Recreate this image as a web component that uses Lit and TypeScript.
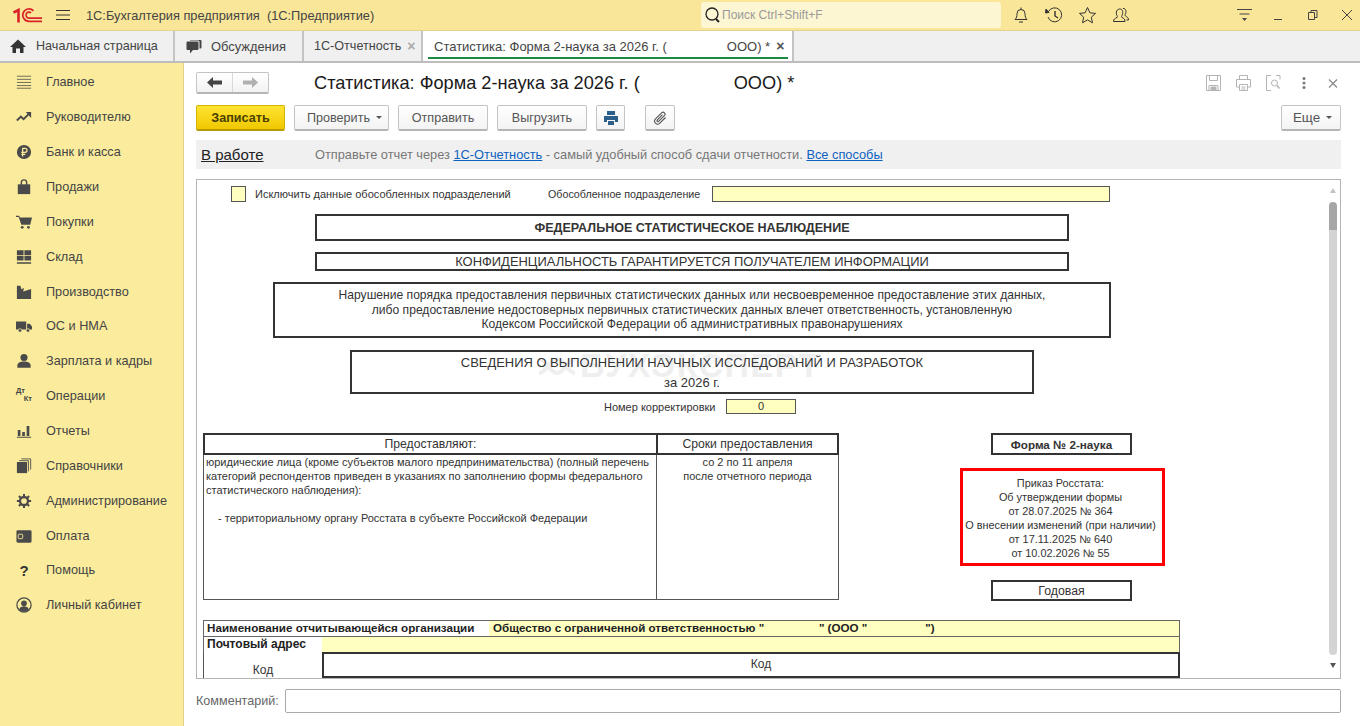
import { LitElement, html, css, svg } from 'lit';
import { customElement } from 'lit/decorators.js';

const ink = '#4a4a4a';

const navIcons: Record<string, unknown> = {
  main: svg`<path d="M1 2.500h16M1 6h16M1 9.500h16M1 13h16M1 16h16" stroke="#6a6a5a" stroke-width="1.100" fill="none"/>`,
  boss: svg`<path d="M1 13l4.500-4.500 3 3 5.500-5.500" stroke="${ink}" stroke-width="2.200" fill="none"/><path d="M11 3.500h6V10z" fill="${ink}"/>`,
  bank: svg`<circle cx="9" cy="9" r="8" fill="${ink}"/><path d="M7.500 14V4.800h2.600a2.200 2.200 0 0 1 0 4.600H6M6 11.600h4.500" stroke="#fbec9d" stroke-width="1.400" fill="none"/>`,
  sale: svg`<path d="M2 6h14v11H2z" fill="${ink}"/><path d="M6 8V4a3 3 0 0 1 6 0v4" stroke="${ink}" stroke-width="1.600" fill="none"/>`,
  cart: svg`<path d="M0 2h3.500l1 2H18l-2 8H6L3 3.500H0z" fill="${ink}"/><circle cx="7" cy="15" r="1.600" fill="${ink}"/><circle cx="14" cy="15" r="1.600" fill="${ink}"/>`,
  store: svg`<path d="M1 1.500h7.500v5.500H1zM9.500 1.500H17v5.500H9.500zM1 8h7.500v5H1zM9.500 8H17v5H9.500zM1 15h16v1.500H1z" fill="${ink}"/>`,
  plant: svg`<path d="M1 2h4l1 4 3-1.500-1 4 9-3V17H1z" fill="${ink}"/>`,
  truck: svg`<path d="M0 4h11.500v9H0zM12.500 6.500h3l2.500 3v3.500h-5.500z" fill="${ink}"/><circle cx="4.500" cy="14" r="2" fill="${ink}" stroke="#fbec9d" stroke-width=".8"/><circle cx="13.500" cy="14" r="2" fill="${ink}" stroke="#fbec9d" stroke-width=".8"/>`,
  person: svg`<circle cx="9" cy="5" r="4" fill="${ink}"/><path d="M1.500 14c0-3 3.500-4.500 7.500-4.500s7.500 1.500 7.500 4.500v2.500h-15z" fill="${ink}"/>`,
  report: svg`<path d="M2 8h3v6.500H2zM7 10h3v4.500H7zM12 3.500h3v11h-3zM1 15.500h16v1.200H1z" fill="${ink}"/>`,
  book: svg`<path d="M1 4.500h11.500V17H1z" fill="${ink}"/><path d="M3.500 3h10.500v12M6 1h10.500v12" stroke="${ink}" fill="none"/>`,
  gear: svg`<circle cx="9" cy="9" r="4.500" fill="none" stroke="${ink}" stroke-width="2.600"/><path d="M9 1v3.500M9 13.500V17M1 9h3.500M13.500 9H17M3.300 3.300l2.500 2.500M12.200 12.200l2.500 2.500M14.700 3.300l-2.500 2.500M5.800 12.200l-2.500 2.500" stroke="${ink}" stroke-width="2.300"/>`,
  wallet: svg`<path d="M2 2.500h14a1.500 1.500 0 0 1 1.500 1.500v11a1.500 1.500 0 0 1-1.500 1.500H2A1.500 1.500 0 0 1 .5 15V4A1.500 1.500 0 0 1 2 2.500z" fill="${ink}"/><rect x="2.500" y="7" width="5" height="5" rx="1" fill="none" stroke="#fbec9d"/>`,
  cabinet: svg`<circle cx="9" cy="9" r="8" fill="none" stroke="${ink}" stroke-width="1.400"/><circle cx="9" cy="7" r="3.200" fill="${ink}"/><path d="M3.500 14.200c.8-2.700 2.900-3.700 5.500-3.700s4.700 1 5.500 3.700a7.300 7.300 0 0 1-11 0z" fill="${ink}"/>`,
};

const navItems: [string, string][] = [
  ['main', 'Главное'], ['boss', 'Руководителю'], ['bank', 'Банк и касса'], ['sale', 'Продажи'],
  ['cart', 'Покупки'], ['store', 'Склад'], ['plant', 'Производство'], ['truck', 'ОС и НМА'],
  ['person', 'Зарплата и кадры'], ['dtkt', 'Операции'], ['report', 'Отчеты'], ['book', 'Справочники'],
  ['gear', 'Администрирование'], ['wallet', 'Оплата'], ['help', 'Помощь'], ['cabinet', 'Личный кабинет'],
];

@customElement('app-root')
export class AppRoot extends LitElement {
  static styles = css`
    :host {
      display: block;
      width: 1360px;
      height: 726px;
      overflow: hidden;
      font-family: "Liberation Sans", Arial, sans-serif;
      color: #333;
      background: #fff;
    }
    svg { display: block; flex: none; }

    .top { height: 31px; background: #f9e698; border-bottom: 1px solid #e3d28c; box-sizing: border-box; display: flex; align-items: center; }
    .logo { margin-left: 13px; }
    .burger { margin-left: 14px; }
    .app-title { margin-left: 16px; width: 615px; font-size: 12.8px; white-space: pre; color: #444; }
    .search { width: 300px; height: 26px; background: #fdf6d2; border-radius: 3px; display: flex; align-items: center; padding-left: 3px; box-sizing: border-box; gap: 1px; font-size: 12px; color: #9a9a9a; }
    .top-icons { display: flex; margin-left: 10px; gap: 13px; }
    .win-icons { display: flex; margin-left: 105px; gap: 16px; }

    .tabs { height: 32px; display: flex; background: #f0f0f0; border-bottom: 2px solid #bdbdbd; box-sizing: border-box; font-size: 12.6px; color: #444; }
    .tab { display: flex; align-items: center; border-right: 2px solid #c4c4c4; box-sizing: border-box; height: 30px; white-space: nowrap; }
    .tab-home { width: 175px; padding-left: 10px; gap: 10px; }
    .tab-talk { width: 129px; padding-left: 11px; gap: 9px; font-size: 12.9px; }
    .tab-rep { width: 119px; padding-left: 10px; gap: 6px; }
    .tab-x { color: #aaa; font-size: 14px; font-weight: bold; }
    .tab-active { width: 371px; padding-left: 11px; background: #fff; position: relative; font-size: 13px; }
    .tab-active::after { content: ""; position: absolute; left: 5px; right: 4px; bottom: 2px; height: 2px; background: #1c8a3c; }
    .tab-gap { display: inline-block; width: 60px; }
    .tab-close { margin-left: 6px; color: #555; font-size: 14px; font-weight: bold; }

    .body { display: flex; height: 664px; }
    .side { width: 184px; background: #fbec9d; border-right: 1px solid #e0d08a; box-sizing: border-box; padding-top: 2px; flex: none; }
    .nav { height: 34.86px; display: flex; align-items: center; font-size: 12.7px; color: #444; }
    .nav-ic { width: 46px; display: flex; justify-content: center; padding-left: 2px; box-sizing: border-box; flex: none; }
    .dtkt { width: 16px; height: 18px; font-size: 7.5px; font-weight: bold; line-height: 8px; color: #444; }
    .dtkt span { display: block; }
    .dtkt span + span { text-align: right; }
    .help-ic { font-size: 15px; font-weight: bold; color: #333; }

    .main { flex: 1; padding: 9px 19px 0 12px; min-width: 0; }
    .head { display: flex; align-items: center; height: 22px; }
    .back { width: 73px; height: 22px; display: flex; box-sizing: border-box; border: 1px solid #c4c4c4; border-bottom: 2px solid #b5b5b5; border-radius: 2px; background: linear-gradient(#fff, #f2f2f2); }
    .back div { flex: 1; display: flex; align-items: center; justify-content: center; }
    .back div + div { border-left: 1px solid #d8d8d8; }
    .title { margin-left: 45px; font-size: 18.2px; color: #1a1a1a; white-space: nowrap; flex: 1; }
    .title-gap { display: inline-block; width: 94px; }
    .head-icons { display: flex; align-items: center; gap: 13px; }
    .dots { margin: 0 2px 0 3px; }

    .tools { display: flex; margin-top: 11px; height: 26px; font-size: 12.6px; }
    .btn { height: 26px; box-sizing: border-box; border: 1px solid #c4c4c4; border-bottom: 2px solid #b5b5b5; border-radius: 2px; background: linear-gradient(#fff, #f3f3f3); display: flex; align-items: center; justify-content: center; color: #555; gap: 6px; margin-right: 9px; flex: none; }
    .save { width: 89px; background: linear-gradient(#ffe433, #f0c800); border-color: #d4b200 #d4b200 #b89a00; font-weight: bold; color: #4a3f00; }
    .check { width: 95px; padding-left: 6px; }
    .send { width: 90px; }
    .upload { width: 90px; }
    .print { width: 29px; margin-right: 20px; }
    .clip { width: 30px; margin-right: 0; }
    .more { width: 60px; margin: 0 0 0 auto; padding-left: 3px; font-size: 13.4px; }
    .caret { width: 0; height: 0; border: 3px solid transparent; border-top-color: #555; border-bottom: 0; }

    .status { height: 29px; margin-top: 9px; background: #f0f0f0; display: flex; align-items: center; padding-left: 5px; font-size: 12.8px; color: #777; white-space: pre; }
    .state { width: 114px; font-size: 15px; color: #222; text-decoration: underline; }
    .status a { color: #0d62c0; text-decoration: underline; }

    .frame { height: 500px; margin-top: 10px; box-sizing: border-box; border: 1px solid #b4b4b4; display: flex; overflow: hidden; }
    .doc { width: 1132px; flex: none; position: relative; font-size: 12px; color: #333; overflow: hidden; }
    .bar { flex: 1; display: flex; flex-direction: column; align-items: center; padding: 8px 3px 0 0; box-sizing: border-box; }
    .arrow-up { width: 0; height: 0; border: 3px solid transparent; border-bottom: 5px solid #c4c4c4; border-top: 0; }
    .thumb { width: 8px; height: 28px; margin-top: 9px; background: #a6a6a6; border-radius: 4px 4px 0 0; }
    .track { width: 8px; height: 425px; background: #d4d4d4; border-radius: 0 0 4px 4px; }
    .arrow-down { width: 0; height: 0; margin-top: 8px; border: 3px solid transparent; border-top: 5px solid #555; border-bottom: 0; }

    .line { display: flex; align-items: center; white-space: nowrap; font-size: 11px; }
    .row-top { margin-top: 5px; height: 17px; padding-left: 34px; }
    .chk { width: 15px; height: 16px; box-sizing: border-box; background: #ffffc0; border: 1px solid #555; }
    .chk-label { margin-left: 9px; width: 293px; }
    .sub-label { width: 164px; font-size: 10.7px; }
    .field { background: #ffffc0; border: 1px solid #555; box-sizing: border-box; }
    .sub-field { width: 398px; height: 16px; }

    .box { border: 2px solid #333; box-sizing: border-box; text-align: center; display: flex; flex-direction: column; justify-content: center; }
    .fed { margin: 12px 0 0 118px; width: 754px; height: 27px; font-weight: bold; font-size: 12.55px; }
    .conf { margin: 11px 0 0 118px; width: 754px; height: 19px; font-size: 12.95px; }
    .law { margin: 11px 0 0 76px; width: 838px; height: 56px; font-size: 12.1px; line-height: 14.5px; }
    .info { margin: 12px 0 0 153px; width: 684px; height: 44px; padding-top: 2px; font-size: 12.95px; line-height: 20px; position: relative; }
    .mark { position: absolute; left: 228px; top: 3px; font-size: 34px; font-weight: bold; color: #efefef; letter-spacing: 1.5px; z-index: -1; white-space: nowrap; }
    .mark-logo { position: absolute; left: 184px; top: 1px; z-index: -1; }
    .doc-layer { position: relative; z-index: 0; }
    .row-num { margin-top: 5px; height: 15px; padding-left: 407px; }
    .num-label { width: 122px; }
    .num-field { width: 70px; height: 15px; text-align: center; line-height: 13px; }

    .mid { display: flex; margin: 19px 0 0 6px; }
    .table { width: 636px; flex: none; }
    .thead { display: grid; grid-template-columns: 451px 1fr; height: 22px; border: 2px solid #333; box-sizing: border-box; text-align: center; font-size: 12.2px; line-height: 18px; }
    .thead div + div { border-left: 2px solid #333; }
    .tbody { display: grid; grid-template-columns: 452px 1fr; height: 145px; border: 1px solid #555; border-top: 0; box-sizing: border-box; font-size: 11px; line-height: 14px; }
    .who { padding: 0 0 0 2px; white-space: nowrap; }
    .who-item { margin: 14px 0 0 12px; }
    .when { border-left: 1px solid #555; text-align: center; }

    .side-col { margin-left: 121px; width: 205px; display: flex; flex-direction: column; align-items: flex-start; position: relative; }
    .form-no { width: 141px; height: 22px; margin-left: 31px; font-weight: bold; font-size: 11.7px; }
    .order { width: 205px; height: 98px; margin-top: 13px; border: 3px solid #f00; box-sizing: border-box; padding: 2px 4px 0 0; text-align: center; font-size: 10.9px; line-height: 14px; display: flex; flex-direction: column; justify-content: center; white-space: nowrap; }
    .period { width: 141px; height: 21px; margin: 14px 0 0 31px; font-size: 12.3px; }

    .org { margin: 19px 0 0 6px; width: 977px; font-size: 12px; }
    .org-row { height: 16px; border: 1px solid #666; border-bottom: 0; box-sizing: border-box; display: flex; align-items: center; white-space: pre; font-weight: bold; color: #222; }
    .org-label { width: 285px; padding: 0 0 2px 3px; box-sizing: border-box; flex: none; font-size: 11.65px; }
    .org-val { flex: 1; height: 100%; background: #ffffc0; padding-left: 4px; font-size: 11.6px; line-height: 14px; }
    .addr-label { width: 118px; padding: 0 0 2px 3px; box-sizing: border-box; flex: none; }
    .org-code { display: flex; height: 26px; }
    .code-cell { width: 119px; border-left: 1px solid #555; box-sizing: border-box; text-align: center; line-height: 36px; flex: none; }
    .code-box { flex: 1; height: 26px; border: 2px solid #333; box-sizing: border-box; padding-left: 20px; text-align: center; line-height: 20px; }

    .comment { display: flex; align-items: center; margin-top: 10px; font-size: 12.6px; color: #666; }
    .comment-label { width: 89px; flex: none; }
    .comment-input { flex: 1; height: 24px; border: 1px solid #aaa; border-radius: 2px; box-sizing: border-box; }
  `;

  private navIcon(id: string) {
    if (id === 'dtkt') return html`<div class="dtkt"><span>Дт</span><span>Кт</span></div>`;
    if (id === 'help') return html`<span class="help-ic">?</span>`;
    return html`<svg width="16" height="16" viewBox="0 0 18 18">${navIcons[id]}</svg>`;
  }

  render() {
    return html`
      <div class="top">
        <svg class="logo" width="29" height="15" viewBox="0 0 29 15" fill="none" stroke="#d8232a">
          <path d="M.5 4.500L5.500 2V14.500" stroke-width="2.600"/>
          <path d="M20.500 2.800A6.200 6.200 0 1 0 16 13.300H29" stroke-width="1.700"/>
          <path d="M18.100 5A3 3 0 1 0 16 10.100H29" stroke-width="1.600"/>
        </svg>
        <svg class="burger" width="14" height="12" viewBox="0 0 14 12" stroke="#333"><path d="M0 1.500h14M0 6h14M0 10.500h14"/></svg>
        <div class="app-title">1С:Бухгалтерия предприятия  (1С:Предприятие)</div>
        <div class="search">
          <svg width="17" height="18" viewBox="0 0 17 18" fill="none" stroke="#222" stroke-width="1.300"><circle cx="8" cy="8" r="6"/><path d="M12 13l3 3" stroke-width="2"/></svg>
          Поиск Ctrl+Shift+F
        </div>
        <div class="top-icons">
          <svg width="20" height="20" viewBox="0 0 20 20" fill="none" stroke="#333"><path d="M4 14.500c1.500-1.500 2-3 2-6a4 4 0 0 1 8 0c0 3 .5 4.500 2 6zM8 17h4M10 2.500v2"/></svg>
          <svg width="20" height="20" viewBox="0 0 20 20" fill="none" stroke="#333"><path d="M4.500 6.500A7 7 0 1 1 4 12"/><path d="M2 4l3 3.500L1.500 8z" fill="#333"/><path d="M11 6v5l3 2" stroke-width="1.400"/></svg>
          <svg width="21" height="20" viewBox="0 0 21 20" fill="none" stroke="#333"><path d="M10.500 2.500l2.400 5.300 5.600.6-4.200 3.800 1.200 5.600-5-2.900-5 2.900 1.200-5.600-4.200-3.800 5.600-.6z"/></svg>
          <svg width="20" height="20" viewBox="0 0 20 20" fill="none" stroke="#333"><path d="M2.500 16.500c0-2.500 1.500-3 3.500-4 .5-.5.500-1.500 0-2-1-1-1.500-6 2.500-6.500s3.500 5 2.500 6.500c-.5.500-.5 1.500 0 2 2 1 3 1.500 3 4z"/><path d="M12 3.500c3-.5 3.500 3.500 2.500 5.500-.5.500-.5 1.500 0 2 1.500 1 3 1.500 3 4h-2"/></svg>
        </div>
        <div class="win-icons">
          <svg width="18" height="18" viewBox="0 0 18 18" stroke="#444" fill="#444"><path d="M1 3.500h15M3.500 8h10" fill="none"/><path d="M6 12h5l-2.500 3z" stroke="none"/></svg>
          <svg width="18" height="18" viewBox="0 0 18 18" stroke="#444"><path d="M4 13.500h8"/></svg>
          <svg width="18" height="18" viewBox="0 0 18 18" stroke="#444" fill="none"><path d="M4.500 6.500h6v7h-6zM7 6.500V4.500h6v7h-2.500"/></svg>
          <svg width="18" height="18" viewBox="0 0 18 18" stroke="#444" fill="none"><path d="M4 4l10 10M14 4L4 14"/></svg>
        </div>
      </div>

      <div class="tabs">
        <div class="tab tab-home">
          <svg width="16" height="14" viewBox="0 0 16 14" fill="#333"><path d="M8 .5L16 8h-2.500v6H10V9.500H6V14H2.500V8H0z"/></svg>
          Начальная страница
        </div>
        <div class="tab tab-talk">
          <svg width="16" height="15" viewBox="0 0 16 15" fill="#444"><path d="M1.500 2.500h10a1 1 0 0 1 1 1V10a1 1 0 0 1-1 1H7l-3 3.500V11H1.500a1 1 0 0 1-1-1V3.500a1 1 0 0 1 1-1z"/><path d="M4 1h10.500a1 1 0 0 1 1 1v6.500a1 1 0 0 1-1 1h-1V3a1.500 1.500 0 0 0-1.500-1.500H4z"/></svg>
          Обсуждения
        </div>
        <div class="tab tab-rep">1С-Отчетность <span class="tab-x">×</span></div>
        <div class="tab tab-active">Статистика: Форма 2-наука за 2026 г. (<span class="tab-gap"></span>ООО) * <span class="tab-close">×</span></div>
      </div>

      <div class="body">
        <div class="side">
          ${navItems.map(([id, label]) => html`<div class="nav"><div class="nav-ic">${this.navIcon(id)}</div>${label}</div>`)}
        </div>

        <div class="main">
          <div class="head">
            <div class="back">
              <div><svg width="15" height="11" viewBox="0 0 15 11" fill="#444"><path d="M0 5.500L6 0v3.500h9v4H6V11z"/></svg></div>
              <div><svg width="15" height="11" viewBox="0 0 15 11" fill="#b0b0b0"><path d="M15 5.500L9 0v3.500H0v4h9V11z"/></svg></div>
            </div>
            <div class="title">Статистика: Форма 2-наука за 2026 г. (<span class="title-gap"></span>ООО) *</div>
            <div class="head-icons">
              <svg width="17" height="18" viewBox="0 0 17 18" fill="none" stroke="#b4b4b4"><path d="M1.500 1.500h14v15h-14zM4.500 1.500v5h8v-5M4 16.500v-5h9v5"/><path d="M6 13h5v3.500H6z" fill="#b4b4b4"/></svg>
              <svg width="17" height="18" viewBox="0 0 17 18" fill="none" stroke="#b4b4b4"><path d="M4.500 5V1.500h8V5M4 13H1.500V5.500h14V13H13M4.500 10.500h8v6h-8zM6.500 13h4M6.500 15h4"/></svg>
              <svg width="17" height="18" viewBox="0 0 17 18" fill="none" stroke="#b4b4b4"><path d="M6 1.500H1.500v15H6M11 1.500h4v4"/><circle cx="9.500" cy="9" r="3"/><path d="M12 11.500l2.500 3" stroke-width="1.500"/></svg>
              <svg class="dots" width="12" height="18" viewBox="0 0 12 18" fill="#777"><circle cx="6" cy="4.500" r="1.500"/><circle cx="6" cy="9" r="1.500"/><circle cx="6" cy="13.500" r="1.500"/></svg>
              <svg width="16" height="18" viewBox="0 0 16 18" fill="none" stroke="#888" stroke-width="1.200"><path d="M4 5.500l8 8M12 5.500l-8 8"/></svg>
            </div>
          </div>

          <div class="tools">
            <div class="btn save">Записать</div>
            <div class="btn check">Проверить <i class="caret"></i></div>
            <div class="btn send">Отправить</div>
            <div class="btn upload">Выгрузить</div>
            <div class="btn print"><svg width="16" height="16" viewBox="0 0 16 16" fill="#2c5f8a"><path d="M4 1h8v4H4zM1 6h14v6h-3v-2H4v2H1zM5 11h6v4H5z"/></svg></div>
            <div class="btn clip"><svg width="16" height="16" viewBox="0 0 16 16" fill="none" stroke="#555" stroke-width="1.100"><path d="M13.500 7.500l-5.700 5.700a3 3 0 0 1-4.300-4.300l6.300-6.300a2 2 0 0 1 2.800 2.800l-6 6a1 1 0 0 1-1.400-1.400l5.300-5.300"/></svg></div>
            <div class="btn more">Еще <i class="caret"></i></div>
          </div>

          <div class="status"><span class="state">В работе</span>Отправьте отчет через <a>1С-Отчетность</a> - самый удобный способ сдачи отчетности. <a>Все способы</a></div>

          <div class="frame">
            <div class="doc">
              <div class="doc-layer">
                <div class="line row-top">
                  <div class="chk"></div>
                  <div class="chk-label">Исключить данные обособленных подразделений</div>
                  <div class="sub-label">Обособленное подразделение</div>
                  <div class="field sub-field"></div>
                </div>
                <div class="box fed">ФЕДЕРАЛЬНОЕ СТАТИСТИЧЕСКОЕ НАБЛЮДЕНИЕ</div>
                <div class="box conf">КОНФИДЕНЦИАЛЬНОСТЬ ГАРАНТИРУЕТСЯ ПОЛУЧАТЕЛЕМ ИНФОРМАЦИИ</div>
                <div class="box law">
                  <div>Нарушение порядка предоставления первичных статистических данных или несвоевременное предоставление этих данных,</div>
                  <div>либо предоставление недостоверных первичных статистических данных влечет ответственность, установленную</div>
                  <div>Кодексом Российской Федерации об административных правонарушениях</div>
                </div>
                <div class="box info">
                  <svg class="mark-logo" width="42" height="26" viewBox="0 0 42 26" fill="none" stroke="#efefef" stroke-width="4"><path d="M3 6c8 0 10 14 18 14s10-14 18-14M3 20c8 0 10-14 18-14s10 14 18 14"/></svg>
                  <span class="mark">БУХЭКСПЕРТ</span>
                  <div>СВЕДЕНИЯ О ВЫПОЛНЕНИИ НАУЧНЫХ ИССЛЕДОВАНИЙ И РАЗРАБОТОК</div>
                  <div>за 2026 г.</div>
                </div>
                <div class="line row-num">
                  <div class="num-label">Номер корректировки</div>
                  <div class="field num-field">0</div>
                </div>
                <div class="mid">
                  <div class="table">
                    <div class="thead"><div>Предоставляют:</div><div>Сроки предоставления</div></div>
                    <div class="tbody">
                      <div class="who">
                        <div>юридические лица (кроме субъектов малого предпринимательства) (полный перечень</div>
                        <div>категорий респондентов приведен в указаниях по заполнению формы федерального</div>
                        <div>статистического наблюдения):</div>
                        <div class="who-item">- территориальному органу Росстата в субъекте Российской Федерации</div>
                      </div>
                      <div class="when"><div>со 2 по 11 апреля</div><div>после отчетного периода</div></div>
                    </div>
                  </div>
                  <div class="side-col">
                    <div class="box form-no">Форма № 2-наука</div>
                    <div class="order">
                      <div>Приказ Росстата:</div>
                      <div>Об утверждении формы</div>
                      <div>от 28.07.2025 № 364</div>
                      <div>О внесении изменений (при наличии)</div>
                      <div>от 17.11.2025 № 640</div>
                      <div>от 10.02.2026 № 55</div>
                    </div>
                    <div class="box period">Годовая</div>
                  </div>
                </div>
                <div class="org">
                  <div class="org-row">
                    <div class="org-label">Наименование отчитывающейся организации</div>
                    <div class="org-val">Общество с ограниченной ответственностью "                 " (ООО "                  ")</div>
                  </div>
                  <div class="org-row">
                    <div class="addr-label">Почтовый адрес</div>
                    <div class="org-val"></div>
                  </div>
                  <div class="org-code">
                    <div class="code-cell">Код</div>
                    <div class="code-box">Код</div>
                  </div>
                </div>
              </div>
            </div>
            <div class="bar">
              <div class="arrow-up"></div>
              <div class="thumb"></div>
              <div class="track"></div>
              <div class="arrow-down"></div>
            </div>
          </div>

          <div class="comment">
            <div class="comment-label">Комментарий:</div>
            <div class="comment-input"></div>
          </div>
        </div>
      </div>
    `;
  }
}
